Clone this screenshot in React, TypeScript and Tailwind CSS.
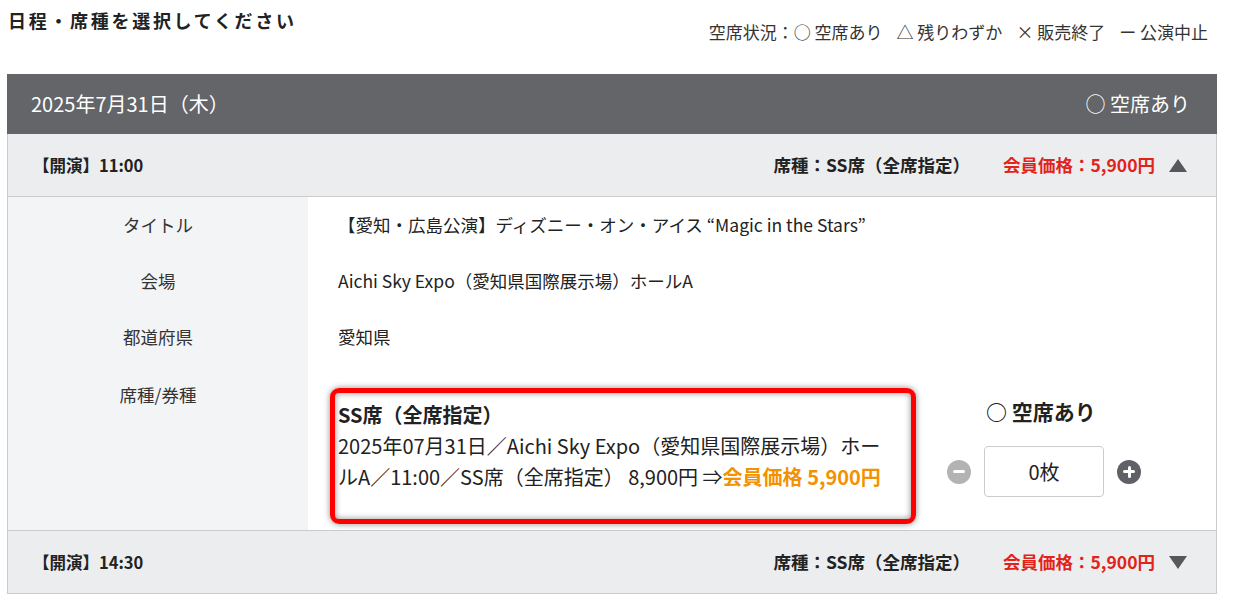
import React from 'react';

const jp = "font-['Noto_Sans_CJK_JP','Noto_Sans',sans-serif]";

function Triangle({ up }: { up: boolean }) {
  return (
    <svg width="18" height="13" viewBox="0 0 18 13" className="shrink-0">
      <polygon points={up ? '9,0 18,13 0,13' : '0,0 18,0 9,13'} fill="#56585c" />
    </svg>
  );
}

function ShowRow({ time, up }: { time: string; up: boolean }) {
  return (
    <div className="flex h-[63px] items-center justify-between border-b border-[#cccccc] bg-[#ecedef] pl-[25px] pr-[29px]">
      <div className="text-[16.5px] font-bold text-[#222]">【開演】{time}</div>
      <div className="flex items-center text-[17.5px] font-bold">
        <span className="text-[#222]">席種：SS席（全席指定）</span>
        <span className="ml-[33px] text-[#e2231a]">会員価格：5,900円</span>
        <span className="ml-[14px]">
          <Triangle up={up} />
        </span>
      </div>
    </div>
  );
}

function Counter() {
  return (
    <div className="flex items-center">
      <button className="flex h-[24px] w-[24px] items-center justify-center rounded-full bg-[#b3b3b3]">
        <span className="h-[3px] w-[12px] rounded-sm bg-white" />
      </button>
      <div className="ml-[13px] flex h-[51px] w-[120px] items-center justify-center rounded-[4px] border border-[#cccccc] text-[20px] text-[#222]">
        0枚
      </div>
      <button className="relative ml-[13px] flex h-[24px] w-[24px] items-center justify-center rounded-full bg-[#5f6166]">
        <span className="h-[3px] w-[12px] rounded-sm bg-white" />
        <span className="absolute h-[12px] w-[3px] rounded-sm bg-white" />
      </button>
    </div>
  );
}

const details = [
  { label: 'タイトル', value: '【愛知・広島公演】ディズニー・オン・アイス “Magic in the Stars”' },
  { label: '会場', value: 'Aichi Sky Expo（愛知県国際展示場）ホールA' },
  { label: '都道府県', value: '愛知県' },
];

export default function App() {
  return (
    <div className={`${jp} h-[616px] w-[1233px] bg-white text-[#333]`}>
      <div className="flex items-start justify-between pl-[8px] pr-[25px]">
        <div className="pt-[7px] text-[18px] font-bold leading-[27px] tracking-[0.15em] text-[#222]">
          日程・席種を選択してください
        </div>
        <div className="flex pt-[22px] text-[17px] leading-[20px] text-[#333]">
          <span>空席状況：○ 空席あり</span>
          <span className="ml-[14px]">△ 残りわずか</span>
          <span className="ml-[14px]">× 販売終了</span>
          <span className="ml-[14px]">ー 公演中止</span>
        </div>
      </div>

      <div className="ml-[7px] mt-[32px] w-[1210px]">
        <div className="flex h-[60px] items-center justify-between bg-[#636569] pl-[24px] pr-[27px] text-[20px] text-white">
          <span>2025年7月31日（木）</span>
          <span>○ 空席あり</span>
        </div>

        <div className="border-x border-[#cccccc]">
          <ShowRow time="11:00" up />

          <div className="flex border-b border-[#cccccc]">
            <div className="w-[300px] shrink-0 bg-[#f3f4f6]">
              {details.map((d) => (
                <div key={d.label} className="py-4 text-center text-[17.5px] leading-6">
                  {d.label}
                </div>
              ))}
              <div className="h-[165px] pt-[18px] text-center text-[17.5px] leading-6">席種/券種</div>
            </div>
            <div className="flex-1 pl-[30px]">
              {details.map((d) => (
                <div key={d.label} className="py-4 text-[17.5px] leading-6 text-[#222]">
                  {d.value}
                </div>
              ))}
              <div className="flex pt-[34px]">
                <div className="relative w-[552px] shrink-0 text-[20px] leading-[31px] text-[#222]">
                  <div className="font-bold">SS席（全席指定）</div>
                  <div>
                    2025年07月31日／Aichi Sky Expo（愛知県国際展示場）ホールA／11:00／SS席（全席指定） 8,900円 ⇒
                    <span className="font-bold text-[#f39200]">会員価格 5,900円</span>
                  </div>
                  <div className="pointer-events-none absolute -left-[8px] -right-[26px] -top-[11px] -bottom-[27px] rounded-[9px] border-[5px] border-[#ff0000] shadow-[0_0_6px_rgba(0,0,0,0.45),inset_0_0_6px_rgba(0,0,0,0.45)]" />
                </div>
                <div className="ml-[57px] flex flex-col">
                  <div className="pl-[39px] text-[21px] font-bold leading-[24px] text-[#222]">○ 空席あり</div>
                  <div className="mt-[23px]">
                    <Counter />
                  </div>
                </div>
              </div>
            </div>
          </div>

          <ShowRow time="14:30" up={false} />
        </div>
      </div>
    </div>
  );
}
